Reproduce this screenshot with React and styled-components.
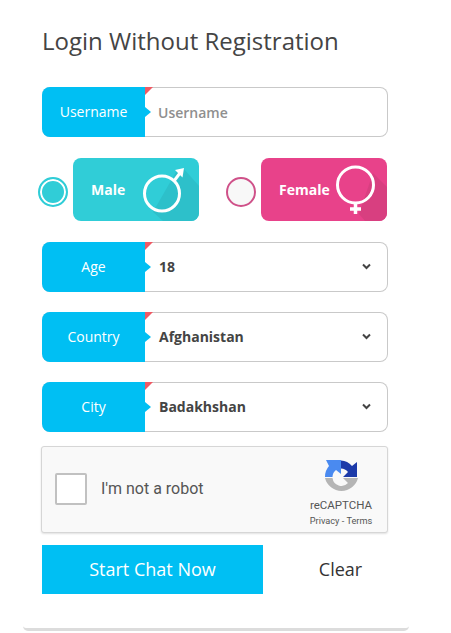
import React from "react";
import styled, { createGlobalStyle } from "styled-components";

const GlobalStyle = createGlobalStyle`
  html, body { margin: 0; padding: 0; background: #fff; }
  body { font-family: "Open Sans", "Liberation Sans", sans-serif; }
`;

const Panel = styled.div`
  box-sizing: border-box;
  width: 386px;
  height: 631px;
  margin-left: 23px;
  padding: 26px 21px 0 19px;
  border-bottom: 3px solid #dcdcdc;
  border-radius: 0 0 5px 5px;
`;

const Title = styled.h2`
  margin: 0 0 29px;
  height: 32px;
  font-size: 24px;
  line-height: 30px;
  font-weight: 400;
  color: #444;
`;

const Row = styled.div`
  display: flex;
  height: 50px;
  margin-bottom: ${p => p.$gap}px;
  box-sizing: border-box;
  border: 1px solid #c9c9c9;
  border-left: 0;
  border-radius: 8px;
  background: #fff;
`;

const Label = styled.div`
  position: relative;
  flex: 0 0 103px;
  box-sizing: border-box;
  margin: -1px 0;
  padding-bottom: 2px;
  display: flex;
  align-items: center;
  justify-content: center;
  background: #00bff3;
  color: #fff;
  font-size: 14px;
  border-radius: 8px 0 0 8px;

  &::before {
    content: "";
    position: absolute;
    top: 0;
    left: 100%;
    border-top: 8px solid #ef5a64;
    border-right: 8px solid transparent;
  }
  &::after {
    content: "";
    position: absolute;
    top: 20px;
    left: 100%;
    border-left: 6px solid #00bff3;
    border-top: 5px solid transparent;
    border-bottom: 5px solid transparent;
  }
`;

const Placeholder = styled.div`
  flex: 1;
  display: flex;
  align-items: center;
  padding-left: 13px;
  font-size: 14px;
  font-weight: 600;
  color: #8f8f8f;
`;

const SelectValue = styled.div`
  flex: 1;
  display: flex;
  align-items: center;
  justify-content: space-between;
  padding: 0 16px 2px 14px;
  font-size: 14px;
  font-weight: 700;
  color: #444;
`;

const GenderRow = styled.div`
  display: flex;
  height: 63px;
  margin: 0 0 21px -4px;
  gap: 27px;
`;

const GenderOption = styled.div`
  display: flex;
  align-items: center;
  gap: 5px;
`;

const Radio = styled.div`
  box-sizing: border-box;
  width: 30px;
  height: 30px;
  margin-top: 5px;
  border-radius: 50%;
  border: 2px solid ${p => p.$color};
  background: ${p => (p.$checked ? p.$color : "#f8f8f8")};
  box-shadow: ${p => (p.$checked ? "inset 0 0 0 2px #fff" : "none")};
`;

const GenderCard = styled.div`
  position: relative;
  overflow: hidden;
  box-sizing: border-box;
  width: 126px;
  height: 63px;
  display: flex;
  align-items: center;
  padding-left: 18px;
  border-radius: 8px;
  background: ${p => p.$bg};
  color: #fff;
  font-size: 14px;
  font-weight: 700;
`;

const CardShade = styled.div`
  position: absolute;
  inset: 0;
  background: ${p => p.$shade};
  clip-path: polygon(${p => p.$points});
`;

const CardIcon = styled.svg`
  position: absolute;
  top: 0;
  right: 0;
  width: 126px;
  height: 63px;
`;

const CardText = styled.span`
  position: relative;
`;

const Captcha = styled.div`
  box-sizing: border-box;
  display: flex;
  align-items: center;
  justify-content: space-between;
  width: 347px;
  height: 87px;
  margin: 14px 0 12px -1px;
  padding: 0 13px 0 13px;
  background: #f9f9f9;
  border: 1px solid #d6d6d6;
  border-radius: 3px;
  box-shadow: 0 1px 2px rgba(0, 0, 0, 0.12);
`;

const CaptchaLeft = styled.div`
  display: flex;
  align-items: center;
  gap: 14px;
  margin-bottom: 2px;
`;

const CaptchaBox = styled.div`
  box-sizing: border-box;
  width: 32px;
  height: 32px;
  background: #fff;
  border: 2px solid #c1c1c1;
  border-radius: 2px;
`;

const CaptchaText = styled.span`
  font-family: Roboto, "Liberation Sans", sans-serif;
  font-size: 16px;
  color: #555;
`;

const CaptchaBrand = styled.div`
  display: flex;
  flex-direction: column;
  align-items: center;
  width: 66px;
  margin-top: 7px;
  color: #555;
  font-family: Roboto, "Liberation Sans", sans-serif;
`;

const BrandName = styled.div`
  font-size: 11.5px;
  line-height: 15px;
  margin-top: 3px;
`;

const BrandLinks = styled.div`
  font-size: 9.2px;
  line-height: 15px;
  white-space: nowrap;
`;

const Actions = styled.div`
  display: flex;
  align-items: center;
`;

const StartButton = styled.button`
  flex: 0 0 221px;
  height: 49px;
  padding: 0 0 2px;
  border: 0;
  background: #00bff3;
  color: #fff;
  font-family: inherit;
  font-size: 18px;
`;

const ClearButton = styled.button`
  flex: 0 0 125px;
  height: 49px;
  padding: 0 0 2px 30px;
  border: 0;
  background: none;
  color: #333;
  font-family: inherit;
  font-size: 18px;
`;

const Chevron = () => (
  <svg width="9" height="7" viewBox="0 0 9 7">
    <path d="M1 1.5 L4.5 5 L8 1.5" fill="none" stroke="#444" strokeWidth="2" />
  </svg>
);

const MaleIcon = () => (
  <CardIcon viewBox="0 0 126 63">
    <circle cx="89" cy="35.5" r="17.5" fill="none" stroke="#fff" strokeWidth="3" />
    <path d="M101 23 L107 15" fill="none" stroke="#fff" strokeWidth="3" />
    <path d="M102 12 L111 10 L109.5 19.5 Z" fill="#fff" />
  </CardIcon>
);

const FemaleIcon = () => (
  <CardIcon viewBox="0 0 126 63">
    <circle cx="94.5" cy="27" r="18" fill="none" stroke="#fff" strokeWidth="3" />
    <path d="M94.5 45 V56 M89 51 H100" fill="none" stroke="#fff" strokeWidth="3.5" />
  </CardIcon>
);

const RecaptchaLogo = () => (
  <svg width="36" height="36" viewBox="0 0 36 36">
    <path d="M2 18 A16 16 0 0 1 6 7 L3 1 H18 V15 L13 11 A9 9 0 0 0 9.5 18 Z" fill="#4a8af0" />
    <path d="M18 1.5 A16 16 0 0 1 29 7 L34 3 V18 H20 L25 13 A9 9 0 0 0 18 9.5 Z" fill="#1c3aa9" />
    <path d="M2 19 H9.5 A9 9 0 0 0 25 24 L20 19 H35 A17 17 0 0 1 2 19 Z" fill="#b5b5b5" />
  </svg>
);

const fields = [
  { label: "Age", value: "18" },
  { label: "Country", value: "Afghanistan" },
  { label: "City", value: "Badakhshan" },
];

const App = () => (
  <Panel>
    <GlobalStyle />
    <Title>Login Without Registration</Title>
    <Row $gap={21}>
      <Label>Username</Label>
      <Placeholder>Username</Placeholder>
    </Row>
    <GenderRow>
      <GenderOption>
        <Radio $color="#30cdd7" $checked />
        <GenderCard $bg="#30cdd7">
          <CardShade $shade="#2dc0ca" $points="80px 54px, 103px 14px, 111px 11px, 126px 28px, 126px 63px, 90px 63px" />
          <MaleIcon />
          <CardText>Male</CardText>
        </GenderCard>
      </GenderOption>
      <GenderOption>
        <Radio $color="#cf5189" />
        <GenderCard $bg="#e8428a">
          <CardShade $shade="#d83f80" $points="112px 15px, 126px 29px, 126px 63px, 104px 63px, 98px 56px" />
          <FemaleIcon />
          <CardText>Female</CardText>
        </GenderCard>
      </GenderOption>
    </GenderRow>
    {fields.map((f, i) => (
      <Row key={f.label} $gap={i < 2 ? 20 : 0}>
        <Label>{f.label}</Label>
        <SelectValue>
          {f.value}
          <Chevron />
        </SelectValue>
      </Row>
    ))}
    <Captcha>
      <CaptchaLeft>
        <CaptchaBox />
        <CaptchaText>I'm not a robot</CaptchaText>
      </CaptchaLeft>
      <CaptchaBrand>
        <RecaptchaLogo />
        <BrandName>reCAPTCHA</BrandName>
        <BrandLinks>Privacy - Terms</BrandLinks>
      </CaptchaBrand>
    </Captcha>
    <Actions>
      <StartButton>Start Chat Now</StartButton>
      <ClearButton>Clear</ClearButton>
    </Actions>
  </Panel>
);

export default App;
